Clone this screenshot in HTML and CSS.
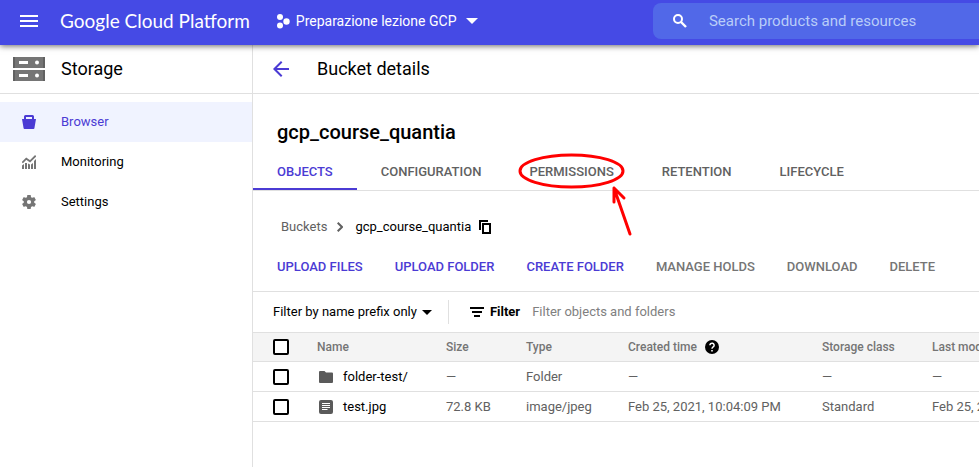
FILE: index.html
```html
<!DOCTYPE html>
<html lang="en">
<head>
<meta charset="utf-8">
<title>Bucket details – Storage</title>
<meta name="viewport" content="width=device-width, initial-scale=1">
<link rel="stylesheet" href="styles.css">
</head>
<body>
<header class="topbar">
  <button class="icon-button menu" type="button" aria-label="Main menu">
    <svg width="18" height="12" viewBox="0 0 18 12" fill="currentColor"><path d="M0 0h18v2H0zM0 5h18v2H0zM0 10h18v2H0z"/></svg>
  </button>
  <a class="brand" href="#">Google Cloud Platform</a>
  <button class="project" type="button">
    <svg width="14" height="15" viewBox="0 0 14 15" fill="currentColor"><circle cx="4" cy="3" r="3"/><circle cx="10.5" cy="7.5" r="3.2"/><circle cx="4" cy="11.500" r="3"/></svg>
    <span>Preparazione lezione GCP</span>
    <svg class="project-caret" width="12" height="6" viewBox="0 0 12 6" fill="currentColor"><path d="M0 0h12L6 6z"/></svg>
  </button>
  <form class="search" role="search">
    <svg width="14" height="14" viewBox="0 0 14 14" fill="none" stroke="currentColor" stroke-width="2"><circle cx="5" cy="5" r="4"/><path d="M8 8l5 5" stroke-width="2.400"/></svg>
    <input type="text" aria-label="Search products and resources" placeholder="Search products and resources">
  </form>
</header>

<div class="layout">
  <aside class="sidebar">
    <div class="section-bar product">
      <svg width="32" height="24" viewBox="0 0 32 24"><path fill="#757575" d="M0 0h32v11H0zM0 13h32v11H0z"/><path fill="#616161" d="M0 0h2v11H0zM30 0h2v11h-2zM0 13h2v11H0zM30 13h2v11h-2z"/><path fill="#fff" d="M6 4h9v3H6zM6 17h9v3H6z"/><circle cx="24" cy="5.500" r="2" fill="#fff"/><circle cx="24" cy="18.500" r="2" fill="#fff"/></svg>
      <span class="section-title">Storage</span>
    </div>
    <nav class="nav">
      <a class="nav-item active" href="#">
        <svg width="14" height="14" viewBox="0 0 14 14" fill="currentColor"><path fill-rule="evenodd" d="M3.500 0h7Q12 0 12 1.500V4h2l-1.600 9.200Q12.300 14 11.500 14h-9Q1.700 14 1.600 13.200L0 4h2V1.500Q2 0 3.500 0zM4 2v2h6V2z"/></svg>
        Browser
      </a>
      <a class="nav-item" href="#">
        <svg width="14" height="14" viewBox="0 0 14 14" fill="currentColor"><path d="M0 10.500l2-1.500V14H0zM3 8h2v6H3zM6 8.500l2 1V14H6zM9 9.500L11 8v6H9zM12 6l2-2v10h-2z"/><path d="M.3 7.700L4.300 3.700 8 6.300 13.700.7" fill="none" stroke="currentColor" stroke-width="1.800"/></svg>
        Monitoring
      </a>
      <a class="nav-item" href="#">
        <svg width="14" height="14" viewBox="2 2 20 20" fill="currentColor"><path d="M19.430 12.980c.04-.32.07-.64.07-.98s-.03-.66-.07-.98l2.110-1.650c.19-.15.24-.42.12-.64l-2-3.460c-.12-.22-.39-.3-.61-.22l-2.490 1c-.52-.4-1.080-.73-1.690-.98l-.38-2.650C14.460 2.180 14.250 2 14 2h-4c-.25 0-.46.18-.49.42l-.38 2.650c-.61.25-1.170.59-1.690.98l-2.490-1c-.23-.09-.49 0-.61.22l-2 3.460c-.13.22-.07.49.12.64l2.110 1.650c-.04.32-.07.65-.07.98s.03.66.07.98l-2.110 1.650c-.19.15-.24.42-.12.64l2 3.460c.12.22.39.3.61.22l2.490-1c.52.4 1.080.73 1.690.98l.38 2.650c.03.24.24.42.49.42h4c.25 0 .46-.18.49-.42l.38-2.650c.61-.25 1.170-.59 1.690-.98l2.490 1c.23.09.49 0 .61-.22l2-3.460c.12-.22.07-.49-.12-.64l-2.110-1.650zM12 15a3 3 0 110-6 3 3 0 010 6z"/></svg>
        Settings
      </a>
    </nav>
  </aside>

  <main class="main">
    <div class="section-bar page-bar">
      <button class="icon-button back" type="button" aria-label="Back">
        <svg width="16" height="16" viewBox="0 0 16 16" fill="none" stroke="currentColor" stroke-width="2"><path d="M16 8H2M8.700 .7L1.400 8l7.300 7.300"/></svg>
      </button>
      <span class="section-title">Bucket details</span>
    </div>

    <h1 class="bucket-name">gcp_course_quantia</h1>

    <nav class="tabs">
      <a class="tab selected" href="#">OBJECTS</a>
      <a class="tab" href="#">CONFIGURATION</a>
      <a class="tab marked" href="#">PERMISSIONS
        <svg class="callout" width="120" height="88" viewBox="0 0 120 88" fill="none" stroke="#f00" stroke-width="3" stroke-linecap="round" stroke-linejoin="round" aria-hidden="true"><ellipse cx="56.500" cy="19" rx="51.500" ry="16"/><path d="M115 82L99 36M99 50V36l10 10"/></svg>
      </a>
      <a class="tab" href="#">RETENTION</a>
      <a class="tab" href="#">LIFECYCLE</a>
    </nav>

    <div class="breadcrumb">
      <a class="crumb" href="#">Buckets</a>
      <svg class="chevron" width="6" height="10" viewBox="0 0 6 10" fill="none" stroke="#616161" stroke-width="2"><path d="M.7.7L5 5 .7 9.300"/></svg>
      <span>gcp_course_quantia</span>
      <button class="icon-button copy" type="button" aria-label="Copy bucket name">
        <svg width="12" height="14" viewBox="0 0 12 14" fill="none" stroke="currentColor" stroke-width="2"><path d="M1 10V1h8"/><rect x="4" y="4" width="7" height="9"/></svg>
      </button>
    </div>

    <div class="actions">
      <button class="action" type="button">UPLOAD FILES</button>
      <button class="action" type="button">UPLOAD FOLDER</button>
      <button class="action" type="button">CREATE FOLDER</button>
      <button class="action" type="button" disabled>MANAGE HOLDS</button>
      <button class="action" type="button" disabled>DOWNLOAD</button>
      <button class="action" type="button" disabled>DELETE</button>
    </div>

    <div class="filters">
      <button class="prefix" type="button">Filter by name prefix only
        <svg width="10" height="5" viewBox="0 0 10 5" fill="currentColor"><path d="M0 0h10L5 5z"/></svg>
      </button>
      <label class="filter-label" for="filter">
        <svg width="14" height="10" viewBox="0 0 14 10" fill="currentColor"><path d="M0 0h14v2H0zM2 4h10v2H2zM4 8h6v2H4z"/></svg>
        Filter
      </label>
      <input class="filter-input" id="filter" type="text" placeholder="Filter objects and folders">
    </div>

    <div class="table-wrap">
      <table class="objects">
        <colgroup>
          <col class="col-check"><col class="col-name"><col class="col-size"><col class="col-type"><col class="col-created"><col class="col-class"><col class="col-modified">
        </colgroup>
        <thead>
          <tr>
            <th><input type="checkbox" aria-label="Select all"></th>
            <th>Name</th>
            <th>Size</th>
            <th>Type</th>
            <th><span class="with-help">Created time
              <svg width="14" height="14" viewBox="0 0 14 14"><circle cx="7" cy="7" r="7" fill="#000"/><path d="M4.900 5.300a2.100 2.100 0 114 .9C8.400 7 7 7.200 7 8.700" fill="none" stroke="#fff" stroke-width="1.500"/><path fill="#fff" d="M6.200 9.900h1.600v1.600H6.200z"/></svg></span></th>
            <th>Storage class</th>
            <th>Last modified</th>
          </tr>
        </thead>
        <tbody>
          <tr>
            <td><input type="checkbox" aria-label="Select folder-test/"></td>
            <td><a class="object" href="#"><svg width="14" height="12" viewBox="0 0 14 12" fill="#5a5a5a"><path d="M1 0h4.500L7 1.500h6q1 0 1 1V11q0 1-1 1H1q-1 0-1-1V1q0-1 1-1z"/></svg>folder-test/</a></td>
            <td>—</td>
            <td>Folder</td>
            <td>—</td>
            <td>—</td>
            <td>—</td>
          </tr>
          <tr>
            <td><input type="checkbox" aria-label="Select test.jpg"></td>
            <td><a class="object" href="#"><svg width="14" height="14" viewBox="0 0 14 14"><rect width="14" height="14" rx="2" fill="#5a5a5a"/><path d="M3 3.500h8M3 5.500h8M3 7.500h8M3 9.500h5.500" stroke="#fff"/></svg>test.jpg</a></td>
            <td>72.8 KB</td>
            <td>image/jpeg</td>
            <td>Feb 25, 2021, 10:04:09 PM</td>
            <td>Standard</td>
            <td>Feb 25, 2021, 10:04:09 PM</td>
          </tr>
        </tbody>
      </table>
    </div>
  </main>
</div>
</body>
</html>
```
FILE: styles.css
```css
:root {
  --accent: #4b3bd4;
  --line: #e0e0e0;
  --muted: #616161;
}

* {
  box-sizing: border-box;
}

body {
  margin: 0;
  min-height: 100vh;
  display: flex;
  flex-direction: column;
  font: 400 13px/20px Roboto, "Liberation Sans", sans-serif;
  color: #000;
  background: #fff;
}

a {
  color: inherit;
  text-decoration: none;
}

button {
  padding: 0;
  border: 0;
  background: none;
  font: inherit;
  color: inherit;
  cursor: pointer;
}

svg {
  display: block;
  flex: none;
}

.icon-button {
  display: flex;
}

/* Top bar */
.topbar {
  position: relative;
  z-index: 1;
  display: flex;
  align-items: center;
  height: 45px;
  padding: 0 0 3px 20px;
  color: #fff;
  background: #454ae5;
  box-shadow: 0 1px 6px rgba(0, 0, 0, 0.6);
}

.brand {
  margin-left: 22px;
  font: 400 19px/24px Lato, Roboto, sans-serif;
  white-space: nowrap;
}

.project {
  display: flex;
  align-items: center;
  gap: 6px;
  margin-left: 26px;
  font-size: 14px;
  white-space: nowrap;
}

.project-caret {
  margin-left: 4px;
}

.search {
  display: flex;
  align-items: center;
  gap: 22px;
  width: 34%;
  height: 36px;
  margin-left: auto;
  padding-left: 20px;
  border-radius: 8px 0 0 8px;
  background: #5168e8;
}

.search input {
  flex: 1;
  min-width: 0;
  padding: 0;
  border: 0;
  outline: 0;
  background: none;
  font: 400 15px/20px Roboto, sans-serif;
  color: #fff;
}

.search input::placeholder {
  color: #b9cdf8;
  opacity: 1;
}

/* Page frame */
.layout {
  flex: 1;
  display: flex;
}

.sidebar {
  flex: none;
  width: 253px;
  border-right: 1px solid var(--line);
}

.main {
  flex: 1;
  min-width: 0;
}

.section-bar {
  display: flex;
  align-items: center;
  height: 49px;
  border-bottom: 1px solid var(--line);
}

.product {
  gap: 16px;
  padding-left: 13px;
}

.page-bar {
  gap: 28px;
  padding-left: 20px;
}

.back {
  color: var(--accent);
}

.section-title {
  font-size: 18px;
  line-height: 24px;
}

.nav {
  padding-top: 8px;
}

.nav-item {
  display: flex;
  align-items: center;
  gap: 25px;
  height: 40px;
  padding-left: 22px;
}

.nav-item svg {
  color: #757575;
}

.nav-item.active,
.nav-item.active svg {
  color: var(--accent);
}

.nav-item.active {
  background: #f0f3ff;
}

/* Bucket heading and tabs */
.bucket-name {
  margin: 0;
  padding: 26px 24px 8px;
  font-size: 20px;
  font-weight: 500;
  line-height: 24px;
}

.tabs {
  display: flex;
  border-bottom: 1px solid var(--line);
}

.tab {
  height: 38px;
  padding: 10px 24px 0;
  font-weight: 500;
  color: var(--muted);
  white-space: nowrap;
}

.tab.selected {
  color: var(--accent);
  border-bottom: 2px solid var(--accent);
}

.tab.marked {
  position: relative;
}

.callout {
  position: absolute;
  left: 10px;
  top: 0;
  pointer-events: none;
}

.breadcrumb {
  display: flex;
  align-items: center;
  gap: 8px;
  padding: 26px 28px 0;
}

.crumb {
  color: var(--muted);
}

.chevron {
  margin: 0 4px 0 2px;
}

.actions {
  display: flex;
  gap: 32px;
  padding: 20px 24px 14px;
  border-bottom: 1px solid var(--line);
}

.action {
  font-weight: 500;
  color: var(--accent);
  white-space: nowrap;
}

.action:disabled {
  color: #757575;
  cursor: default;
}

/* Filters */
.filters {
  display: flex;
  align-items: center;
  height: 41px;
  padding-left: 20px;
  border-bottom: 1px solid var(--line);
}

.prefix {
  display: flex;
  align-items: center;
  gap: 5px;
  height: 24px;
  padding-right: 16px;
  border-right: 1px solid var(--line);
  white-space: nowrap;
}

.filter-label {
  display: flex;
  align-items: center;
  gap: 6px;
  margin: 0 12px 0 21px;
  font-weight: 700;
}

.filter-input {
  flex: 1;
  min-width: 0;
  padding: 0;
  border: 0;
  outline: 0;
  font: inherit;
}

.filter-input::placeholder {
  color: #808080;
  opacity: 1;
}

/* Objects table */
.table-wrap {
  overflow: hidden;
}

.objects {
  width: 100%;
  min-width: 860px;
  table-layout: fixed;
  border-collapse: separate;
  border-spacing: 0;
}

.col-check { width: 64px; }
.col-name { width: 129px; }
.col-size { width: 80px; }
.col-type { width: 102px; }
.col-created { width: 194px; }
.col-class { width: 110px; }

.objects th,
.objects td {
  height: 30px;
  padding: 0;
  border-bottom: 1px solid var(--line);
  text-align: left;
  color: var(--muted);
  white-space: nowrap;
}

.objects th {
  height: 29px;
  font-size: 12px;
  font-weight: 500;
  color: #757575;
  background: #f4f4f4;
}

.objects input {
  display: block;
  appearance: none;
  width: 16px;
  height: 16px;
  margin: 0 0 0 20px;
  border: 2px solid #000;
  border-radius: 2px;
  background: #fff;
}

.objects input:checked {
  background: var(--accent);
}

.object {
  display: flex;
  align-items: center;
  gap: 10px;
  padding-left: 2px;
  color: #000;
}

.with-help {
  display: flex;
  align-items: center;
  gap: 8px;
}
```
